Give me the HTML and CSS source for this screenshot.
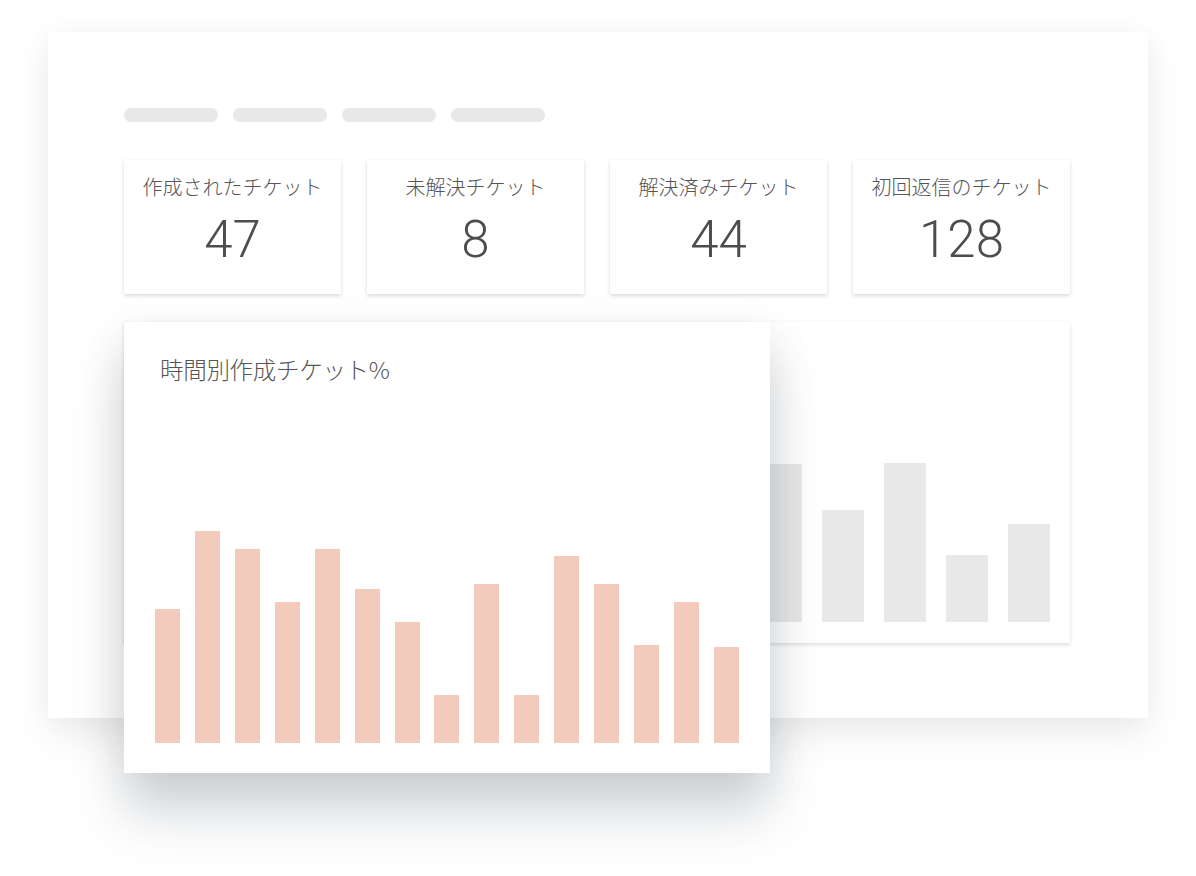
FILE: index.html
```html
<!DOCTYPE html>
<html lang="ja">
<head>
<meta charset="utf-8">
<title>Dashboard</title>
<link rel="stylesheet" href="styles.css">
</head>
<body>
<div class="stage">
  <div class="panel">
    <div class="pills">
      <span class="pill"></span>
      <span class="pill"></span>
      <span class="pill"></span>
      <span class="pill"></span>
    </div>
    <div class="stats">
      <div class="stat">
        <div class="stat-label">作成されたチケット</div>
        <div class="stat-value">47</div>
      </div>
      <div class="stat">
        <div class="stat-label">未解決チケット</div>
        <div class="stat-value">8</div>
      </div>
      <div class="stat">
        <div class="stat-label">解決済みチケット</div>
        <div class="stat-value">44</div>
      </div>
      <div class="stat">
        <div class="stat-label">初回返信のチケット</div>
        <div class="stat-value">128</div>
      </div>
    </div>
    <div class="charts">
      <div class="back-card">
        <div class="back-bars">
          <span class="gbar" style="height:158px"></span>
          <span class="gbar" style="height:112px"></span>
          <span class="gbar" style="height:159px"></span>
          <span class="gbar" style="height:67px"></span>
          <span class="gbar" style="height:98px"></span>
        </div>
      </div>
      <div class="front-card">
        <div class="front-title">時間別作成チケット%</div>
        <div class="front-bars">
          <span class="bar" style="height:134px"></span>
          <span class="bar" style="height:212px"></span>
          <span class="bar" style="height:194px"></span>
          <span class="bar" style="height:141px"></span>
          <span class="bar" style="height:194px"></span>
          <span class="bar" style="height:154px"></span>
          <span class="bar" style="height:121px"></span>
          <span class="bar" style="height:48px"></span>
          <span class="bar" style="height:159px"></span>
          <span class="bar" style="height:48px"></span>
          <span class="bar" style="height:187px"></span>
          <span class="bar" style="height:159px"></span>
          <span class="bar" style="height:98px"></span>
          <span class="bar" style="height:141px"></span>
          <span class="bar" style="height:96px"></span>
        </div>
      </div>
    </div>
  </div>
</div>
</body>
</html>
```

FILE: styles.css
```css
html, body {
  margin: 0;
  padding: 0;
  background: #ffffff;
}

.stage {
  width: 1196px;
  height: 876px;
  padding: 32px 0 0 48px;
  box-sizing: border-box;
  overflow: hidden;
  font-family: "Noto Sans CJK JP", "Noto Sans", sans-serif;
  color: #555555;
}

.panel {
  width: 1100px;
  height: 686px;
  background: #ffffff;
  box-sizing: border-box;
  padding: 76px 78px 0 76px;
  box-shadow: 0 18px 36px rgba(0, 0, 0, 0.07), 0 0 28px rgba(0, 0, 0, 0.035);
}

.pills {
  display: flex;
  gap: 15px;
  height: 14px;
}

.pill {
  width: 94px;
  height: 14px;
  border-radius: 7px;
  background: #e8e8e8;
}

.stats {
  margin-top: 38px;
  display: grid;
  grid-template-columns: repeat(4, 1fr);
  column-gap: 26px;
}

.stat {
  height: 134px;
  background: #ffffff;
  box-shadow: 0 2px 4px rgba(0, 0, 0, 0.13), 0 0 3px rgba(0, 0, 0, 0.04);
  text-align: center;
  padding-top: 16px;
  box-sizing: border-box;
}

.stat-label {
  font-size: 20px;
  line-height: 22px;
  font-weight: 300;
  color: #555555;
}

.stat-value {
  margin-top: 17px;
  font-family: Roboto, "Liberation Sans", sans-serif;
  font-weight: 300;
  font-size: 51px;
  line-height: 50px;
  color: #4d4d4d;
}

.charts {
  position: relative;
  margin-top: 28px;
}

.back-card {
  height: 321px;
  background: #ffffff;
  box-shadow: 0 2px 4px rgba(0, 0, 0, 0.12), 0 0 3px rgba(0, 0, 0, 0.04);
  display: flex;
  align-items: flex-end;
  justify-content: flex-end;
  padding: 0 20px 21px 0;
  box-sizing: border-box;
}

.back-bars {
  display: flex;
  align-items: flex-end;
  gap: 20px;
}

.gbar {
  display: block;
  width: 42px;
  background: #e8e8e8;
}

.front-card {
  position: absolute;
  left: 0;
  top: 0;
  width: 646px;
  height: 451px;
  background: #ffffff;
  box-sizing: border-box;
  padding: 34px 31px 30px 36px;
  display: flex;
  flex-direction: column;
  box-shadow: 0 42px 50px rgba(60, 76, 92, 0.2), 0 12px 44px rgba(0, 0, 0, 0.09);
}

.front-title {
  font-size: 23.5px;
  line-height: 26px;
  font-weight: 300;
  color: #555555;
  letter-spacing: -0.3px;
}

.front-bars {
  flex: 1;
  margin-left: -5px;
  display: flex;
  align-items: flex-end;
  justify-content: space-between;
}

.bar {
  display: block;
  width: 25px;
  background: #f2cbbd;
}
```
